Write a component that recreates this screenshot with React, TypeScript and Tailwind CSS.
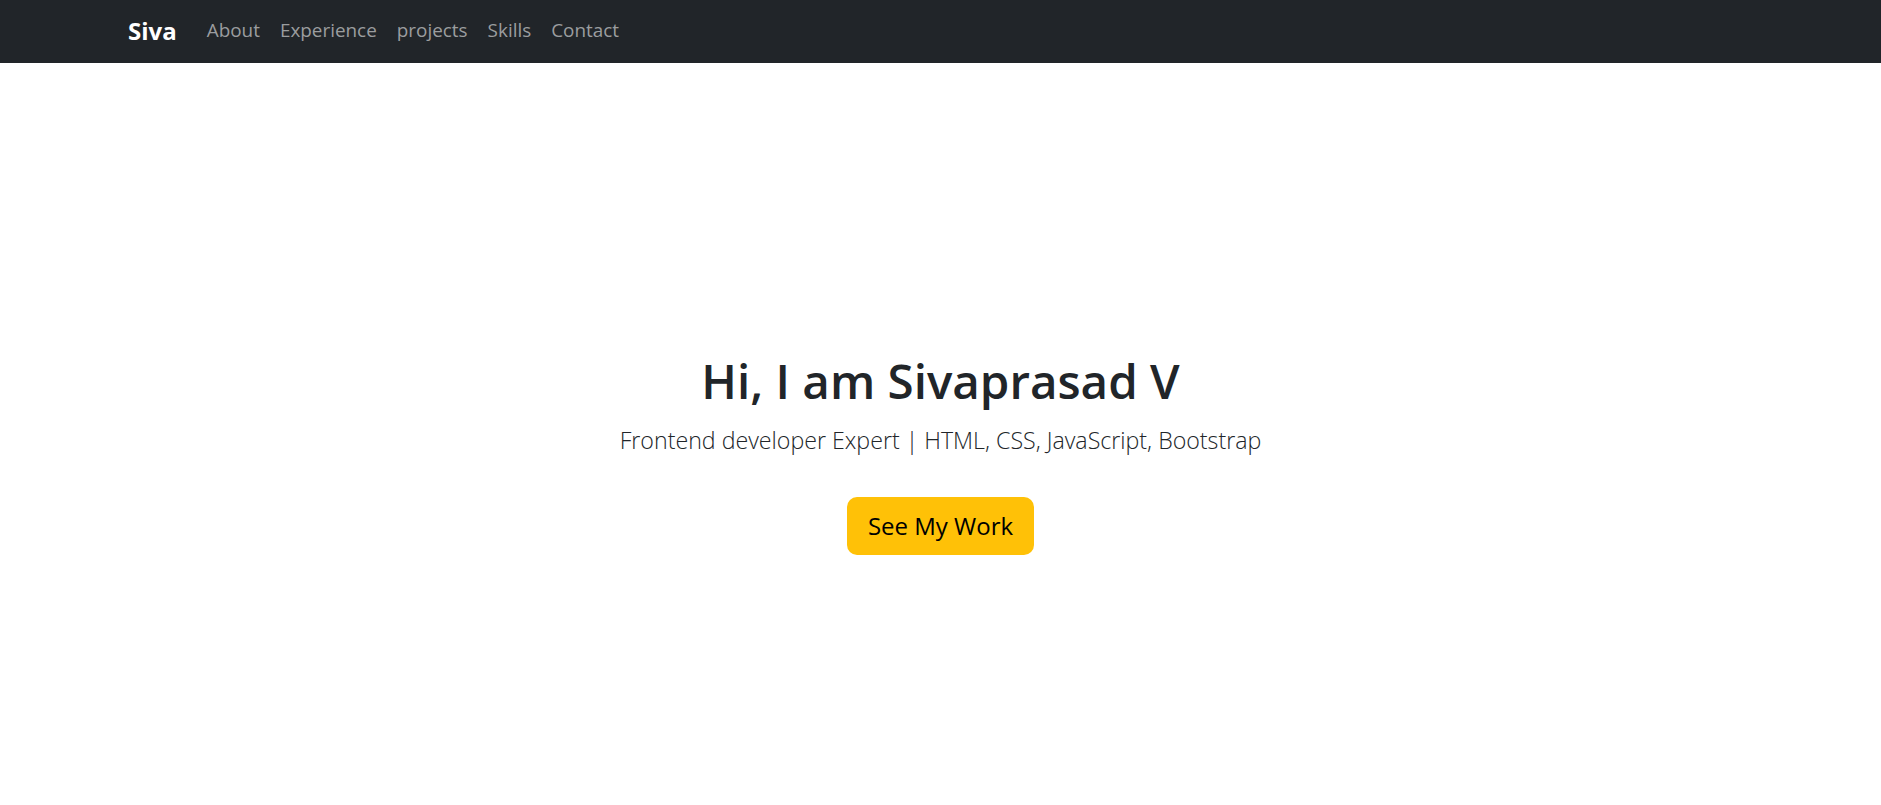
import React from "react";

const links = ["About", "Experience", "projects", "Skills", "Contact"];

export default function App() {
    return (
        <div className="min-h-screen bg-white text-[#212529] font-['Open_Sans',sans-serif]">
            {/* Navbar */}
            <nav className="h-[63px] w-full bg-[#212529]">
                <div className="flex h-full items-center pb-[2px] pl-[128px]">
                    <a href="#" className="mr-[20px] text-[24px] font-bold text-white">
                        Siva
                    </a>
                    <ul className="flex items-center">
                        {links.map((l) => (
                            <li key={l}>
                                <a href="#" className="block px-[10px] text-[18.9px] text-[#9b9d9f]">
                                    {l}
                                </a>
                            </li>
                        ))}
                    </ul>
                </div>
            </nav>

            {/* Hero */}
            <section className="flex flex-col items-center pt-[288px] text-center">
                <h1 className="text-[47.5px] leading-[60px] font-semibold">Hi, I am Sivaprasad V</h1>
                <p className="mt-[12px] text-[23.2px] leading-[35px] font-light">
                    Frontend developer Expert | HTML, CSS, JavaScript, Bootstrap
                </p>
                <a
                    href="#projects"
                    className="mt-[39px] flex h-[58px] w-[187px] items-center justify-center rounded-[10px] bg-[#ffc107] text-[24px] text-black"
                >
                    See My Work
                </a>
            </section>
        </div>
    );
}
